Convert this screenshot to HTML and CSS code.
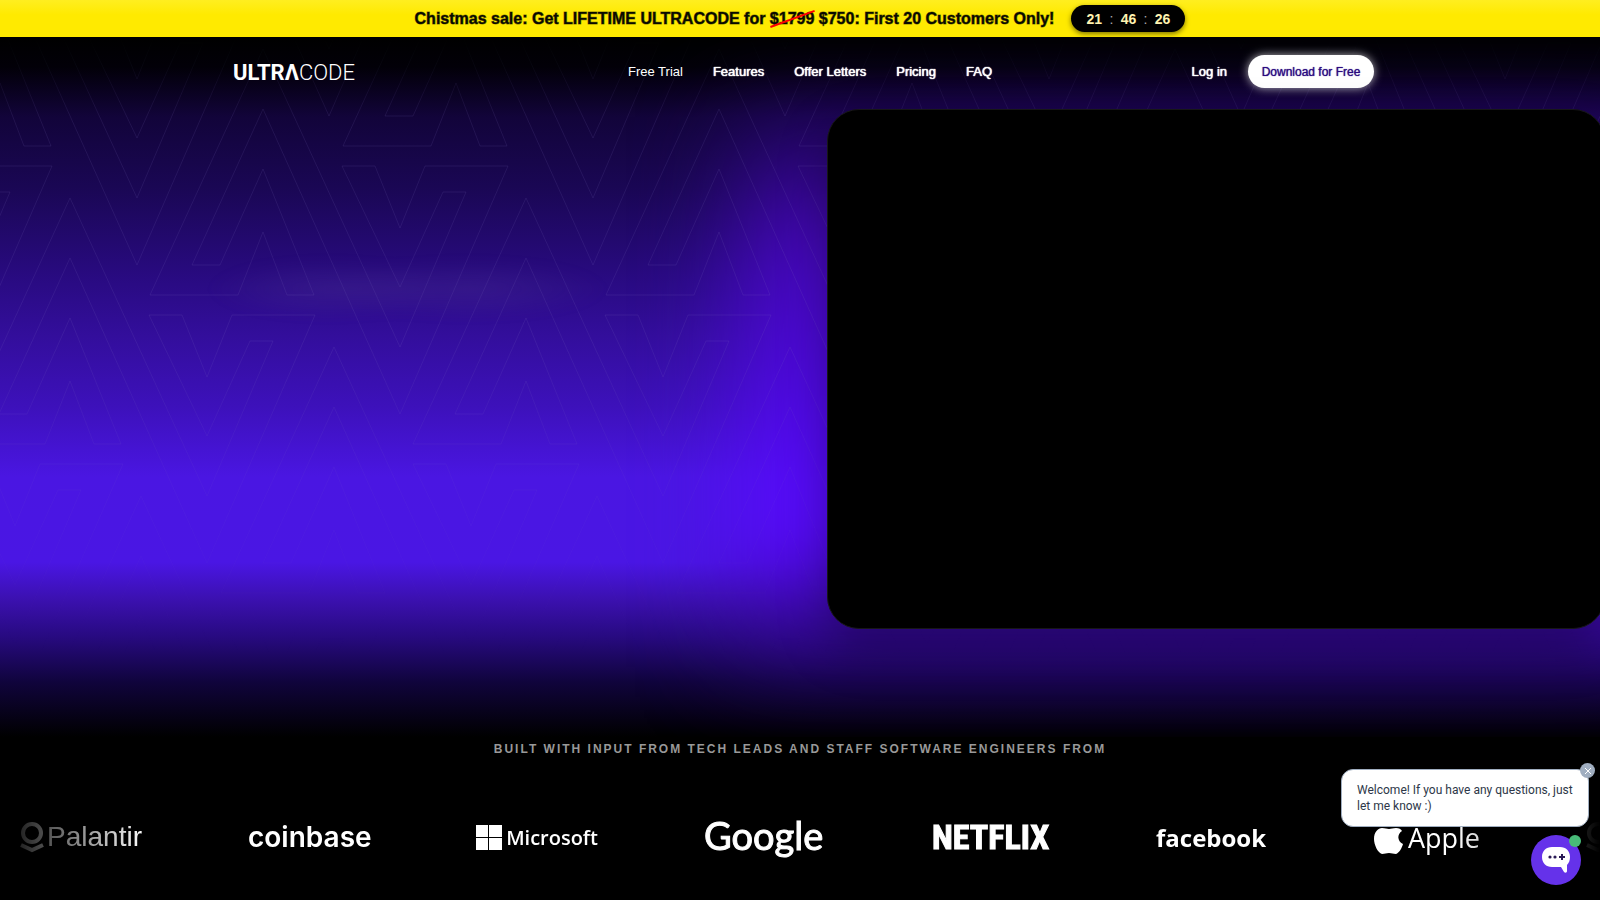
FILE: index.html
```html
<!DOCTYPE html>
<html lang="en">
<head>
  <meta charset="UTF-8">
  <meta name="viewport" content="width=device-width, initial-scale=1.0">
  <title>Ultracode</title>
  <link rel="stylesheet" href="styles.css">
</head>
<body>
  <div class="banner">
    <p class="banner-text">Chistmas sale: Get LIFETIME ULTRACODE for <span class="old-price">$1799</span> $750: First 20 Customers Only!</p>
    <div class="countdown">
      <span>21</span><i>:</i><span>46</span><i>:</i><span>26</span>
    </div>
  </div>

  <div class="hero">
    <div class="glow"></div>
    <svg class="pattern" width="1600" height="640" aria-hidden="true">
      <defs>
        <path id="unit" d="M150 258H238L263 195L287 258H314L263 132L220 228H192L263 72L400 377L508 129H425L400 191L375 129H342L400 250L443 155H466L400 310L263 12Z"/>
        <g id="row">
          <use href="#unit" x="-912"/>
          <use href="#unit" x="-456"/>
          <use href="#unit"/>
          <use href="#unit" x="456"/>
          <use href="#unit" x="912"/>
          <use href="#unit" x="1368"/>
          <use href="#unit" x="1824"/>
        </g>
      </defs>
      <use href="#row" x="385" y="-298"/>
      <use href="#row" x="193" y="-149"/>
      <use href="#row"/>
      <use href="#row" x="-193" y="149"/>
      <use href="#row" x="71" y="298"/>
      <use href="#row" x="-122" y="447"/>
    </svg>

    <header class="header">
      <a class="logo" href="#" aria-label="Ultracode"><b>ULTRΛ</b><span>CODE</span></a>
      <nav class="nav">
        <a class="plain" href="#trial">Free Trial</a>
        <a href="#features">Features</a>
        <a href="#offers">Offer Letters</a>
        <a href="#pricing">Pricing</a>
        <a href="#faq">FAQ</a>
      </nav>
      <div class="actions">
        <a href="#login">Log in</a>
        <button class="download">Download for Free</button>
      </div>
    </header>

    <main class="stage">
      <div class="headline-haze"></div>
      <div class="video"></div>
    </main>
  </div>

  <section class="companies">
    <h2>Built with input from tech leads and staff software engineers from</h2>
    <div class="logos">
      <div class="brand palantir">
        <svg width="24" height="32" viewBox="0 0 24 32" fill="none" stroke="#fff" stroke-width="4"><circle cx="12" cy="12" r="9"/><path d="M1 24l11 5 11-5"/></svg>
        <span>Palantir</span>
      </div>
      <div class="brand coinbase">coinbase</div>
      <div class="brand microsoft">
        <svg width="26" height="25" viewBox="0 0 26 25" fill="#fff"><path d="M0 0h12v12H0zM13 0h13v12H13zM0 13h12v12H0zM13 13h13v12H13z"/></svg>
        <span>Microsoft</span>
      </div>
      <div class="brand google">Google</div>
      <div class="brand netflix">NETFLIX</div>
      <div class="brand facebook">facebook</div>
      <div class="brand apple">
        <svg width="30" height="36" viewBox="0 0 30 36" fill="#fff"><path d="M21 0c0 4-3 7-6 7 0-4 3-7 6-7zM28 12c-5 3-5 10 1 13-1 4-4 9-7 10-3 0-4-1-7-1s-4 1-7 1C4 34 0 26 0 20 0 13 4 9 8 9c3 0 5 1 7 1s4-1 7-1 5 1 6 3z"/></svg>
        <span>Apple</span>
      </div>
      <!-- carousel wraps round to the first logo -->
      <div class="brand palantir">
        <svg width="24" height="32" viewBox="0 0 24 32" fill="none" stroke="#fff" stroke-width="4"><circle cx="12" cy="12" r="9"/><path d="M1 24l11 5 11-5"/></svg>
      </div>
    </div>
  </section>

  <div class="chat">
    <div class="chat-message">
      Welcome! If you have any questions, just let me know :)
      <button class="chat-close" aria-label="Close">
        <svg width="8" height="8" viewBox="0 0 8 8" stroke="#fff"><path d="M1 1l6 6M7 1L1 7"/></svg>
      </button>
    </div>
    <button class="chat-button" aria-label="Open chat">
      <svg width="28" height="26" viewBox="0 0 28 26"><path fill="#fff" d="M10 0h8c6 0 10 4 10 10 0 3-1 6-3 8v6c0 2-2 2-3 1l-3-5h-9C4 20 0 16 0 10S4 0 10 0z"/><path stroke="#2a1a55" stroke-width="2" d="M17 10h6M20 7v6"/><circle cx="8" cy="10" r="1.6" fill="#2a1a55"/><circle cx="13" cy="10" r="1.6" fill="#2a1a55"/></svg>
      <span class="online"></span>
    </button>
  </div>
</body>
</html>
```

FILE: styles.css
```css
* {
  box-sizing: border-box;
}
body {
  margin: 0;
  background: #000;
  color: #fff;
  font-family: "Liberation Sans", Arial, sans-serif;
  overflow: hidden;
}
a {
  color: inherit;
  text-decoration: none;
}
button {
  font-family: inherit;
  border: none;
  cursor: pointer;
}

/* sale banner */
.banner {
  display: flex;
  justify-content: center;
  align-items: center;
  gap: 17px;
  height: 37px;
  background: linear-gradient(#ffee20, #ffea00 40%);
  color: #0a0a00;
}
.banner-text {
  margin: 0;
  font-size: 16px;
  font-weight: bold;
  -webkit-text-stroke: 1px rgba(10, 10, 0, 0.5);
}
.old-price {
  position: relative;
}
.old-price::after {
  content: "";
  position: absolute;
  left: -1px;
  right: -1px;
  top: 8px;
  height: 2px;
  background: #f00;
  transform: rotate(-20deg);
}
.countdown {
  display: flex;
  justify-content: space-between;
  align-items: center;
  width: 114px;
  height: 27px;
  padding: 0 15px;
  border-radius: 14px;
  background: #000;
  color: #fff3b0;
  font-size: 14px;
  font-weight: bold;
  box-shadow: 0 2px 5px rgba(0, 0, 0, 0.5);
}
.countdown i {
  font-style: normal;
  font-weight: normal;
  color: #aaa;
}

/* hero */
.hero {
  position: relative;
  height: 700px;
  overflow: hidden;
  background: linear-gradient(#000 0, #020008 30px, #12043a 80px, #1a0754 150px, #270a7c 230px, #330e9c 300px, #3d11bb 370px, #4a16e2 440px, #4a16e4 525px, #3a10ac 565px, #270a80 600px, #10043c 645px, #000 700px);
}
.glow {
  position: absolute;
  left: 46%;
  right: -80px;
  top: 80px;
  bottom: 70px;
  background: linear-gradient(#1c0554, #4508b8 120px, #4c09d8 240px, #560bfa 360px, #590bff 450px, #280670 510px, #1c0452);
  filter: blur(46px);
}
.pattern {
  position: absolute;
  left: 0;
  top: 0;
  fill: none;
  stroke: #8a7acb;
  stroke-opacity: 0.13;
  -webkit-mask-image: linear-gradient(transparent, #000 80px, #000 300px, rgba(0, 0, 0, 0.6) 420px, transparent 620px);
  mask-image: linear-gradient(transparent, #000 80px, #000 300px, rgba(0, 0, 0, 0.6) 420px, transparent 620px);
}
.header {
  position: relative;
  display: grid;
  grid-template-columns: 395px 1fr auto;
  align-items: center;
  max-width: 1148px;
  margin: 0 auto;
  padding: 18px 0 0 7px;
  font-size: 13px;
}
.logo {
  padding-top: 2px;
  font-family: Roboto, sans-serif;
  font-size: 22px;
}
.logo span {
  font-weight: 300;
}
.nav {
  display: flex;
  gap: 30px;
}
.nav a,
.actions a {
  text-shadow: 0 0 1px #fff, 0 0 1px #fff;
}
.nav .plain {
  text-shadow: none;
}
.actions {
  display: flex;
  align-items: center;
  gap: 21px;
}
.download {
  width: 126px;
  height: 33px;
  padding: 0;
  border-radius: 17px;
  background: #fff;
  color: #2b0a80;
  font-size: 12px;
  text-shadow: 0 0 1px #2b0a80;
  box-shadow: 0 0 10px rgba(255, 255, 255, 0.7);
}
.stage {
  position: relative;
  display: flex;
  justify-content: flex-end;
  margin-top: 21px;
}
.headline-haze {
  position: absolute;
  left: 13%;
  top: 150px;
  width: 25%;
  height: 60px;
  background: radial-gradient(closest-side, rgba(110, 90, 160, 0.16), transparent) 0 0 / 60% 100% no-repeat, radial-gradient(closest-side, rgba(110, 90, 160, 0.16), transparent) 100% 0 / 70% 100% no-repeat;
  filter: blur(6px);
}
.video {
  width: calc(49% - 6px);
  margin-right: -5px;
  aspect-ratio: 778 / 520;
  border: 1px solid #171717;
  border-radius: 32px;
  background: #000;
  box-shadow: 0 20px 50px rgba(0, 0, 0, 0.3);
}

/* companies */
.companies h2 {
  margin: 4px 0 0;
  text-align: center;
  text-transform: uppercase;
  font-size: 12px;
  line-height: 16px;
  letter-spacing: 2px;
  color: #999;
}
.logos {
  display: flex;
  align-items: center;
  gap: 106px;
  height: 60px;
  margin-top: 50px;
  padding-left: 20px;
  overflow: hidden;
  -webkit-mask-image: linear-gradient(90deg, transparent, #000 9%, #000 91%, transparent);
  mask-image: linear-gradient(90deg, transparent, #000 9%, #000 91%, transparent);
}
.brand {
  display: flex;
  flex: none;
  align-items: center;
  justify-content: space-between;
  width: 122px;
  white-space: nowrap;
}
.palantir {
  font-size: 28px;
}
.coinbase {
  font-family: Inter, sans-serif;
  font-size: 28px;
  font-weight: 600;
}
.microsoft {
  font-family: "Open Sans", sans-serif;
  font-size: 20px;
  font-weight: 600;
}
.google {
  padding-bottom: 4px;
  font-family: Lato, sans-serif;
  font-size: 38px;
  -webkit-text-stroke: 1px #fff;
}
.netflix {
  width: 118px;
  font-family: "Roboto Condensed", Roboto, sans-serif;
  font-size: 34px;
  font-weight: bold;
  -webkit-text-stroke: 1px #fff;
}
.facebook {
  width: 112px;
  font-family: "Open Sans", sans-serif;
  font-size: 24px;
  font-weight: bold;
}
.apple {
  width: 106px;
  font-family: "Open Sans", sans-serif;
  font-size: 27px;
}

/* chat widget */
.chat {
  position: fixed;
  right: 11px;
  bottom: 15px;
  display: flex;
  flex-direction: column;
  align-items: flex-end;
  gap: 8px;
}
.chat-message {
  position: relative;
  width: 248px;
  padding: 12px 15px;
  border: 1px solid #a0aec0;
  border-radius: 12px;
  background: #fff;
  color: #2d3748;
  font-family: Roboto, sans-serif;
  font-size: 12px;
  line-height: 16px;
}
.chat-close {
  position: absolute;
  top: -7px;
  right: -7px;
  display: flex;
  align-items: center;
  justify-content: center;
  width: 15px;
  height: 15px;
  padding: 0;
  border-radius: 50%;
  background: #a0aec0;
}
.chat-button {
  position: relative;
  display: flex;
  align-items: center;
  justify-content: center;
  width: 50px;
  height: 50px;
  margin-right: 8px;
  border-radius: 50%;
  background: #6532ea;
}
.online {
  position: absolute;
  top: 0;
  right: 0;
  width: 12px;
  height: 12px;
  border-radius: 50%;
  background: #48bb78;
}
```
